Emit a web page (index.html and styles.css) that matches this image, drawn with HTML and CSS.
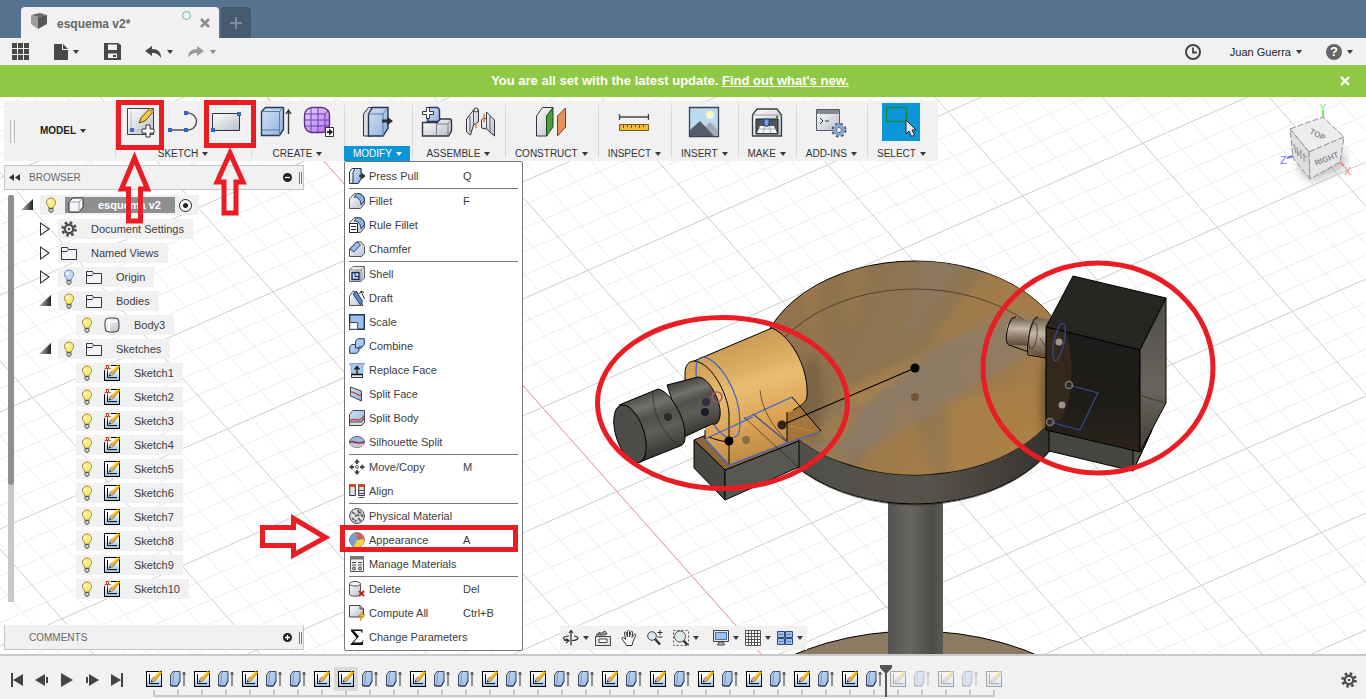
FILE: index.html
```html
<!DOCTYPE html>
<html lang="en">

<head>
    <meta charset="UTF-8">
    <meta name="viewport" content="width=device-width, initial-scale=1.0">
    <title>esquema v2*</title>
    <link rel="stylesheet" href="styles.css">
</head>

<body>

    <!-- shared icons -->
    <svg class="sprite" aria-hidden="true">
        <defs>
            <linearGradient id="gBlue" x1="0" y1="0" x2="1" y2="1">
                <stop offset="0" stop-color="#d3e3f6" />
                <stop offset="1" stop-color="#8db0dc" />
            </linearGradient>
            <linearGradient id="gGrey" x1="0" y1="0" x2="1" y2="1">
                <stop offset="0" stop-color="#fff" />
                <stop offset="1" stop-color="#b9bec9" />
            </linearGradient>
            <linearGradient id="gSketch" x1="0" y1="0" x2="0" y2="1">
                <stop offset="0.3" stop-color="#fff" />
                <stop offset="1" stop-color="#8dbbe8" />
            </linearGradient>
            <linearGradient id="gPurple" x1="0" y1="0" x2="1" y2="1">
                <stop offset="0" stop-color="#ecd9ff" />
                <stop offset="1" stop-color="#b272ee" />
            </linearGradient>
        </defs>
        <symbol id="i-bulb" viewBox="0 0 16 16">
            <path d="M8 1a4.600 4.600 0 0 0-4.600 4.600c0 2.300 2.300 3 2.300 5.400h4.600c0-2.400 2.300-3.100 2.300-5.400A4.600 4.600 0 0 0 8 1z" fill="#f9ec78" stroke="#a8893a" />
            <circle cx="6.500" cy="4.500" r="1.500" fill="#fffbd6" />
            <path d="M6 11.500h4v2.500l-1 1.300H7L6 14z" fill="#c9ccd2" stroke="#555" />
        </symbol>
        <symbol id="i-bulb-off" viewBox="0 0 16 16">
            <path d="M8 1a4.600 4.600 0 0 0-4.600 4.600c0 2.300 2.300 3 2.300 5.400h4.600c0-2.400 2.300-3.100 2.300-5.400A4.600 4.600 0 0 0 8 1z" fill="#c3d9fa" stroke="#6f86b5" />
            <circle cx="6.500" cy="4.500" r="1.500" fill="#f2f7ff" />
            <path d="M6 11.500h4v2.500l-1 1.300H7L6 14z" fill="#c9ccd2" stroke="#555" />
        </symbol>
        <symbol id="i-folder" viewBox="0 0 16 16">
            <path d="M.5 14.500v-12h6l1 2h8v10z" fill="#f4f5f8" stroke="#33363d" />
            <path d="M1 6.500h5l1.500-2" fill="none" stroke="#33363d" />
        </symbol>
        <symbol id="i-gear" viewBox="0 0 16 16">
            <circle cx="8" cy="8" r="6.500" fill="none" stroke="#4d4d4d" stroke-width="2.600" stroke-dasharray="2.550" />
            <circle cx="8" cy="8" r="4.200" fill="none" stroke="#4d4d4d" stroke-width="2.400" />
            <circle cx="8" cy="8" r="1.300" fill="#4d4d4d" />
        </symbol>
        <symbol id="i-cube" viewBox="0 0 16 16">
            <path d="M1 5l4-4h10v9l-4 5H1z" fill="#f4f5f8" stroke="#2e3138" />
            <path d="M1 5h10v10M11 5l4-4" fill="none" stroke="#9da1aa" />
        </symbol>
        <symbol id="i-body" viewBox="0 0 16 16">
            <rect x="1" y="1" width="14" height="14" rx="4" fill="url(#gGrey)" stroke="#3b3e45" />
            <path d="M3 4.500h10M5 5v9" stroke="#fff" stroke-width="2" />
        </symbol>
        <symbol id="i-sketch" viewBox="0 0 16 16">
            <rect x=".5" y=".5" width="15" height="15" fill="url(#gSketch)" stroke="#000" />
            <path d="M3.500 3v9.500h9.500" fill="none" stroke="#111" />
            <path d="M5 11l1.500-4L8 5.500l3 2.500-2 2z" fill="#dcae86" stroke="#77542a" stroke-width=".5" />
            <path d="M8 5.500L13.500 0 16 1.500l-5 6.500z" fill="#ffd21f" />
            <path d="M9.500 7L15 .8l1 .9-5 6.300z" fill="#d99a12" />
            <path d="M4.800 11.200l.8-2 1.200 1.200z" fill="#222" />
        </symbol>
        <symbol id="i-sketch-pin" viewBox="0 0 16 16">
            <use href="#i-sketch" />
            <path d="M0 0h7v5H0z" fill="#f1f1f1" />
            <path d="M1.500.5h4M2.500 1v2M4.500 1v2M.5 3.500h6M3.500 3.500v3" stroke="#c2491d" />
        </symbol>
        <symbol id="i-extrude" viewBox="0 0 16 16">
            <path d="M.5 4L3 .500h7v9.500l-2.500 5h-7z" fill="url(#gBlue)" stroke="#3b4a68" />
            <path d="M3 13V4l2-3.500" fill="none" stroke="#6d87b4" />
            <path d="M.5 12.500l1 2.500h6l2.500-5" fill="none" stroke="#2e3b55" />
            <path d="M14 15V2M12.500 3.500L14 1l1.500 2.500" fill="none" stroke="#333" />
        </symbol>
        <symbol id="i-presspull" viewBox="0 0 16 16">
            <path d="M.5 4L3 .5h9V11l-3 4.500H.5z" fill="url(#gGrey)" stroke="#26334d" />
            <path d="M4 4.500L6 .5h6V11l-3 4.500H4z" fill="url(#gBlue)" stroke="#26334d" />
            <path d="M10 8h4M12.500 5.500L15.500 8l-3 2.500" fill="none" stroke="#222" stroke-width="1.500" />
        </symbol>
        <symbol id="i-fillet" viewBox="0 0 16 16">
            <path d="M.5 15.500V6L5 .8h5c3 0 5.500 3 5.500 6V11l-4 4.500z" fill="url(#gGrey)" stroke="#555" />
            <path d="M5 4l3-3.500c4 0 7.500 3 7.500 7L12 12C12 7 9 4 5 4z" fill="#8fb2df" stroke="#1f3c74" />
        </symbol>
        <symbol id="i-rule" viewBox="0 0 16 16">
            <use href="#i-fillet" />
            <path d="M.5 6.500h8v9h-8z" fill="#fff" stroke="#222" />
            <path d="M2 9.500h5M2 12.500h5" stroke="#222" />
        </symbol>
        <symbol id="i-chamfer" viewBox="0 0 16 16">
            <path d="M.5 15.500V8L8 .8h4l3.500 4.500v7l-3 3.200z" fill="url(#gGrey)" stroke="#555" />
            <path d="M.8 8L8 .8l3.500 3L5 11z" fill="#9dbde6" stroke="#24427c" />
        </symbol>
        <symbol id="i-shell" viewBox="0 0 16 16">
            <path d="M.5 4L4 .5h11.500V12L12 15.500H.5z" fill="url(#gGrey)" stroke="#666" />
            <path d="M.5 4H12v11.500M12 4L15.500.5" fill="none" stroke="#888" />
            <path d="M3 6.500h7v7H3z" fill="#c6d9f0" stroke="#162d5c" stroke-width="1.400" />
            <path d="M6 6.500v4h4" fill="none" stroke="#162d5c" />
        </symbol>
        <symbol id="i-draft" viewBox="0 0 16 16">
            <path d="M.5 15.500V6L4 1l4 1 6 13.500z" fill="url(#gGrey)" stroke="#555" />
            <path d="M4 4l3-3 6.500 10-2 4z" fill="#5f86bf" stroke="#24427c" />
            <path d="M15.500 9L12 1M10.500 4L12 1l3 1.500" fill="none" stroke="#333" />
        </symbol>
        <symbol id="i-scale" viewBox="0 0 16 16">
            <path d="M.7.7h14.600v14.600H.7z" fill="#9cc2ee" stroke="#24314d" stroke-width="1.400" />
            <path d="M.7 8.500h8v6.800h-8z" fill="#fff" stroke="#444" />
        </symbol>
        <symbol id="i-combine" viewBox="0 0 16 16">
            <path d="M.7 15.300V9l2-2.500h4V3L9 .7h6.300v5.800L13 9h-3v4l-2.500 2.300z" fill="url(#gBlue)" stroke="#1c386e" />
            <path d="M6.500 7v3H13" fill="none" stroke="#1c386e" />
        </symbol>
        <symbol id="i-replace" viewBox="0 0 16 16">
            <path d="M2.500 2h11v13.500h-11z" fill="#e9eef5" stroke="#333" />
            <path d="M0 2c5-2 9 1.500 16-1l-2 3v8H2V4z" fill="#a9c9ef" stroke="#6d9bd2" stroke-width=".7" />
            <path d="M2.500 12.500h11M8 12V4.500M5.500 7.500L8 4.500l2.500 3" fill="none" stroke="#111" stroke-width="1.300" />
        </symbol>
        <symbol id="i-splitface" viewBox="0 0 16 16">
            <path d="M1.500 1L12.500 5v10L1.500 10z" fill="url(#gBlue)" stroke="#3b4252" />
            <path d="M1.500 6c4-1 6 4 11 3.500" fill="none" stroke="#cf3b2a" stroke-width="1.400" />
        </symbol>
        <symbol id="i-splitbody" viewBox="0 0 16 16">
            <path d="M.5 4.500L4 .5h11.500v11l-3 4H.5z" fill="url(#gBlue)" stroke="#3b4b6b" />
            <path d="M.5 12h12l3-4v4l-3 3.500H.5z" fill="#ddd" stroke="#444" />
            <path d="M.5 11c4-4 7 1 12-2l3-3.500" fill="none" stroke="#cf3b2a" stroke-width="1.400" />
        </symbol>
        <symbol id="i-silhouette" viewBox="0 0 16 16">
            <ellipse cx="8" cy="8" rx="7.500" ry="5.500" fill="#9db8dc" stroke="#5b5f69" />
            <path d="M.8 9C5 12 9 8 15.200 9c-1 6-13 6-14.400 0z" fill="#c8c8cc" />
            <path d="M.6 8c4-2 8 3 14.800 0" fill="none" stroke="#9c2d3c" stroke-width="1.500" />
        </symbol>
        <symbol id="i-move" viewBox="0 0 16 16">
            <path d="M8 0l3 3.500H9V5H7V3.500H5zM8 16l3-3.500H9V11H7v1.500H5zM0 8l3.500-3v2H5v2H3.500v2zM16 8l-3.500-3v2H11v2h1.500v2z" fill="#444" />
            <circle cx="8" cy="8" r="1.500" fill="none" stroke="#555" />
        </symbol>
        <symbol id="i-align" viewBox="0 0 16 16">
            <path d="M.7 1.500h5.600v11H.7zM9.700 1.500h5.600v11H9.700z" fill="#dfe2e8" stroke="#333" />
            <path d="M.5 1h6v3h-6zM9.500 1h6v3h-6z" fill="#d6481f" />
            <path d="M9.500 7.500h6M9.500 10.500h6M9.500 14.500h6" stroke="#555" />
        </symbol>
        <symbol id="i-physical" viewBox="0 0 16 16">
            <circle cx="8" cy="8" r="7.500" fill="#cfcfcf" stroke="#555" />
            <path d="M3 4l3 2M9 2l1 3M6 8l4-1M12 6l2 3M3 10l2 2M9 10l3 3M7 12l-1 2M12 4l-2 1" stroke="#555" stroke-width="1.500" />
            <path d="M5 3l2 1M3 7l2 2M8 9l-1 2M11 9l2 2" stroke="#fff" stroke-width="1.500" />
        </symbol>
        <symbol id="i-appearance" viewBox="0 0 16 16">
            <circle cx="8" cy="8" r="7.500" fill="#8fb0dc" stroke="#888" />
            <path d="M7 .8A7.500 7.500 0 0 1 15.300 7L8 8z" fill="#cf5f58" />
            <path d="M15.400 7.500A7.500 7.500 0 0 1 5 14.800L8 8z" fill="#f3d23b" />
            <path d="M4 14.500A7.500 7.500 0 0 1 7 .8L8 8z" fill="#7d9cc9" />
        </symbol>
        <symbol id="i-manage" viewBox="0 0 16 16">
            <path d="M1.500.500h13v15h-13z" fill="#f4f4f4" stroke="#555" />
            <path d="M1 0h14v3.500H1z" fill="#777" />
            <path d="M3 6.500h4M9 6.500h4M3 9h4M9 9h4" stroke="#444" />
            <circle cx="5" cy="12.500" r="1.500" fill="#bbb" stroke="#444" />
            <circle cx="11" cy="12.500" r="1.500" fill="#bbb" stroke="#444" />
        </symbol>
        <symbol id="i-delete" viewBox="0 0 16 16">
            <path d="M.5 3v10c0 3 11 3 11 0V3" fill="url(#gGrey)" stroke="#555" />
            <ellipse cx="6" cy="2.800" rx="5.500" ry="2.300" fill="#f5f5f5" stroke="#555" />
            <path d="M10 10l5 5M15 10l-5 5" stroke="#b52a1e" stroke-width="2" />
        </symbol>
        <symbol id="i-compute" viewBox="0 0 16 16">
            <path d="M.5 .5H11l3.500 3.500v8H.5z" fill="url(#gGrey)" stroke="#444" />
            <path d="M11 .5v3.500h3.500" fill="none" stroke="#444" />
            <path d="M14 6l-4.500 5h3L11 16l5-6.500h-3z" fill="#ffc62b" stroke="#c07a10" stroke-width=".6" />
        </symbol>
        <symbol id="i-sigma" viewBox="0 0 16 16">
            <path d="M2 .5h11.500V4H13c-.5-1.700-1-2-3-2H5l5 5.500L4.500 13.500H11c2 0 2.500-.8 3-2.500h.5l-.8 5H1.500v-.8L7.500 9 2 2z" fill="#111" />
        </symbol>
    </svg>

    <header class="tabs">
        <div class="tab">
            <svg class="tab-cube" width="18" height="18" viewBox="0 0 18 18">
                <path d="M1 3l9-2 7 2-9 2z" fill="#6b6b6b" />
                <path d="M1 3l7 2v12l-7-5z" fill="#9b9b9b" />
                <path d="M8 5l9-2v9l-9 5z" fill="#565656" />
            </svg>
            <span class="tab-title">esquema v2*</span>
            <span class="tab-status"></span>
            <button class="tab-close" aria-label="Close tab">
                <svg width="10" height="10" viewBox="0 0 10 10"><path d="M1 1l8 8M9 1L1 9" stroke="#8c8c8c" stroke-width="2.500" /></svg>
            </button>
        </div>
        <button class="tab-new" aria-label="New tab">
            <svg width="12" height="12" viewBox="0 0 12 12"><path d="M6 0v12M0 6h12" stroke="#7e8b9b" stroke-width="2" /></svg>
        </button>
    </header>

    <nav class="quickbar">
        <button aria-label="Data panel">
            <svg width="18" height="18" viewBox="0 0 18 18"><path d="M0 0h5v5H0zM6 0h5v5H6zM12 0h5v5h-5zM0 6h5v5H0zM6 6h5v5H6zM12 6h5v5h-5zM0 12h5v5H0zM6 12h5v5H6zM12 12h5v5h-5z" fill="#484848" /></svg>
        </button>
        <button class="drop q-file" aria-label="File">
            <svg width="14" height="16" viewBox="0 0 14 16"><path d="M0 0h8v6h6v10H0zM9 0l5 5H9z" fill="#484848" /></svg>
        </button>
        <button aria-label="Save">
            <svg width="17" height="17" viewBox="0 0 17 17"><path d="M0 0h14l3 2v15H0z" fill="#484848" /><path d="M4 1.500h9V7H4zM4 10.500h9V15H4z" fill="#f1f1f1" /><path d="M9 12h3v2H9z" fill="#484848" /></svg>
        </button>
        <button class="drop q-undo" aria-label="Undo">
            <svg width="17" height="12" viewBox="0 0 17 12"><path d="M0 5l7-5v3c6 0 9 3 9 9-2-3-4-5-9-5v3z" fill="#484848" /></svg>
        </button>
        <button class="drop q-redo" aria-label="Redo">
            <svg width="17" height="12" viewBox="0 0 17 12"><path d="M16 5L9 0v3C3 3 0 6 0 12c2-3 4-5 9-5v3z" fill="#9a9a9a" /></svg>
        </button>
        <button class="q-clock" aria-label="Job status">
            <svg width="16" height="16" viewBox="0 0 16 16"><circle cx="8" cy="8" r="7" fill="none" stroke="#444" stroke-width="2" /><path d="M8 3.500V8.500h4" fill="none" stroke="#444" stroke-width="1.800" /></svg>
        </button>
        <button class="drop q-user">Juan Guerra</button>
        <button class="drop q-help" aria-label="Help"><span class="help">?</span></button>
    </nav>

    <div class="banner">
        <p>You are all set with the latest update. <a href="#">Find out what's new.</a></p>
        <button class="banner-close" aria-label="Dismiss">
            <svg width="10" height="10" viewBox="0 0 10 10"><path d="M1 1l8 8M9 1L1 9" stroke="#fff" stroke-width="2.400" /></svg>
        </button>
    </div>

    <main class="workspace">

        <!-- 3D viewport -->
        <svg class="viewport" aria-label="3D view">
            <defs>
                <linearGradient id="wood" x1="0" y1="0" x2="1" y2="0.300">
                    <stop offset="0" stop-color="#94734a" />
                    <stop offset=".3" stop-color="#8f7350" />
                    <stop offset=".6" stop-color="#8e7553" />
                    <stop offset="1" stop-color="#a67e4a" />
                </linearGradient>
                <linearGradient id="rim" x1="0" y1="0" x2="1" y2="0">
                    <stop offset="0" stop-color="#4e4d49" />
                    <stop offset=".55" stop-color="#56534b" />
                    <stop offset="1" stop-color="#2f2d29" />
                </linearGradient>
                <linearGradient id="pole" x1="0" y1="0" x2="1" y2="0">
                    <stop offset="0" stop-color="#55534f" />
                    <stop offset=".4" stop-color="#686660" />
                    <stop offset=".8" stop-color="#4d4c46" />
                    <stop offset="1" stop-color="#5b5953" />
                </linearGradient>
                <linearGradient id="orange" x1=".3" y1="0" x2=".6" y2="1">
                    <stop offset="0" stop-color="#c49555" />
                    <stop offset=".25" stop-color="#d5a65b" />
                    <stop offset=".45" stop-color="#e9bd72" />
                    <stop offset=".7" stop-color="#dca557" />
                    <stop offset="1" stop-color="#b58443" />
                </linearGradient>
                <linearGradient id="shaft" x1=".3" y1="0" x2=".6" y2="1">
                    <stop offset="0" stop-color="#383733" />
                    <stop offset=".25" stop-color="#73716b" />
                    <stop offset=".4" stop-color="#504f4a" />
                    <stop offset=".6" stop-color="#5f5d57" />
                    <stop offset="1" stop-color="#2d2c29" />
                </linearGradient>
                <linearGradient id="steel" x1="0" y1="0" x2="0" y2="1">
                    <stop offset="0" stop-color="#6c5a47" />
                    <stop offset=".4" stop-color="#c5b6a5" />
                    <stop offset=".7" stop-color="#8a7764" />
                    <stop offset="1" stop-color="#5a4632" />
                </linearGradient>
                <linearGradient id="side" x1="0" y1="0" x2="0" y2="1">
                    <stop offset="0" stop-color="#4f4e49" />
                    <stop offset=".6" stop-color="#69655c" />
                    <stop offset="1" stop-color="#443f38" />
                </linearGradient>
                <linearGradient id="front" x1="0" y1="0" x2="0" y2="1">
                    <stop offset="0" stop-color="#1c1d1b" />
                    <stop offset=".6" stop-color="#1e1c19" />
                    <stop offset="1" stop-color="#2b231b" />
                </linearGradient>
                <filter id="soft"><feGaussianBlur stdDeviation="5" /></filter>
                <clipPath id="discClip"><ellipse cx="915" cy="368" rx="156" ry="107" /></clipPath>
            </defs>
            <g transform="translate(0 -97)">
                <g id="grid" class="grid"></g>
                <path d="M267 97L762 655" class="axis" />

                <!-- stand -->
                <ellipse cx="915" cy="789" rx="230" ry="158" fill="#8d7a63" stroke="#000" />
                <path d="M888 495h55v170h-55z" fill="url(#pole)" />

                <!-- disc -->
                <path d="M759 368v29a156 107 0 0 0 312 0v-29z" fill="url(#rim)" stroke="#000" />
                <ellipse cx="915" cy="368" rx="156" ry="107" fill="url(#wood)" stroke="#000" />
                <g clip-path="url(#discClip)">
                    <g filter="url(#soft)">
                        <path d="M925 345L1000 255l90 60z" fill="#a57d46" opacity=".7" />
                        <path d="M850 330L845 255l25 0z" fill="#a47b45" opacity=".5" />
                        <path d="M815 350L800 285l20-10z" fill="#a47b45" opacity=".5" />
                        <path d="M780 445L1000 310l70 20L830 470z" fill="#8b7f70" opacity=".6" />
                        <path d="M835 395L940 345l-80 62z" fill="#b08443" opacity=".7" />
                        <path d="M860 405L740 460l90 30z" fill="#a67d43" opacity=".7" />
                        <path d="M905 400L850 480l90 10z" fill="#a67e47" opacity=".7" />
                        <path d="M950 400l130-25v90l-130 30z" fill="#aa8045" opacity=".8" />
                        <path d="M880 430L790 445l40 10z" fill="#85796b" opacity=".6" />
                        <path d="M900 350l20-95h50z" fill="#8a7a63" opacity=".7" />
                        <path d="M830 455L960 380l-70 60z" fill="#8a7c68" opacity=".6" />
                        <ellipse cx="1055" cy="400" rx="14" ry="50" fill="#4a3418" opacity=".7" />
                        <ellipse cx="812" cy="400" rx="12" ry="44" fill="#6e583b" opacity=".6" />
                    </g>
                </g>
                <ellipse cx="915" cy="397" rx="156" ry="108" class="ghost" />
                <circle cx="915" cy="368" r="4.500" />
                <circle cx="915" cy="397" r="4" fill="#6f5736" />

                <!-- motor on the left -->
                <path d="M694 440l74-30 31 31-74 29z" fill="#8b673a" stroke="#000" />
                <path d="M694 440l31 30v30l-31-32z" fill="#494843" stroke="#000" />
                <path d="M725 470l74-29v26l-74 33z" fill="#595751" stroke="#000" />
                <path d="M744 419l48-22 29 34-34 11z" fill="#a4763c" />
                <path d="M685 388v-15c0-8 4-12 9-12l9-4 69-29c22 10 37 44 35 68-1 8-6 11-20 17v29l-58 23-24-27v-38z" fill="url(#orange)" />
                <path d="M694 361l78-33c22 10 37 44 35 68 0 6-6 10-14 14" class="edge" />
                <path d="M685 388v-15c0-8 4-12 9-12 16 1 33 30 35 52v52M705 430v9M787 412v30" class="edge" />
                <path d="M729 440c0 3-10 1-20-3" class="edge" />
                <path d="M703 357c14 1 37 32 37 66 0 12-3 15-11 15-14-4-33-40-33-66 0-10 3-15 7-15z" class="blue" />
                <path d="M705 439l24 26 92-34M705 439l48-22M744 419l48-22" class="blue" />
                <path d="M753 414l34 28" class="blue dim" />
                <path d="M792 397l29 34" class="edge" />
                <path d="M744 417l54 50M760 390c2 20 12 35 26 50" class="ghost" />
                <path d="M790 426l22 5" stroke="#d6862c" />
                <path d="M782 425L915 368" stroke="#000" stroke-width="1.200" />
                <path d="M667 385l31-8c11 0 24 25 22 39-1 7-4 9-8 8l-28 13z" fill="url(#shaft)" stroke="#000" />
                <path d="M619 405l39-16c12 2 28 29 27 48 0 6-2 8-5 9l-40 16z" fill="url(#shaft)" />
                <path d="M619 405l39-16c12 2 28 29 27 48 0 6-2 8-5 9l-40 16" class="edge" />
                <path d="M653 392c-1 20 10 44 27 54" class="ghost" />
                <ellipse cx="630" cy="434" rx="14" ry="30" transform="rotate(-18 630 434)" fill="#4d4c48" stroke="#000" />
                <circle cx="668" cy="417" r="4" fill="#2c2b28" />
                <circle cx="706" cy="402" r="4" fill="#302e3a" />
                <circle cx="705" cy="412" r="4" fill="#1c1a28" />
                <circle cx="717" cy="397" r="5" fill="none" stroke="#a2576c" stroke-width="1.500" />
                <circle cx="729" cy="441" r="4.500" />
                <circle cx="746" cy="440" r="4" fill="#8a7048" />
                <circle cx="782" cy="425" r="4.500" fill="#32240f" />

                <!-- box on the right -->
                <path d="M1013 317l22 5v24l-24-1c-8-1-6-27 2-28z" fill="url(#steel)" />
                <path d="M1016 317c-8-1-13 27-7 28l20 7" class="edge" />
                <path d="M1036 317l14 3v38l-20-4c-6-4-1-37 6-37z" fill="url(#steel)" />
                <path d="M1038 317c-8 0-12 34-10 38l18 3" class="edge" />
                <ellipse cx="1033" cy="336" rx="4" ry="13" transform="rotate(8 1033 336)" class="ghost" />
                <path d="M1049 425v26l84 20 19-41-15-25z" fill="#454541" stroke="#000" />
                <path d="M1133 445v26l19-41z" fill="#55524a" stroke="#000" />
                <path d="M1073 276l93 22-26 52-94-23z" fill="#272622" stroke="#000" />
                <path d="M1046 327l94 23v102l-94-22z" fill="url(#front)" stroke="#000" />
                <path d="M1047 328l18 4c10 25 8 60-2 85l-16 12z" fill="#35281c" />
                <path d="M1140 350l26-52v105l-26 49z" fill="url(#side)" stroke="#000" />
                <path d="M1073 276v100l93 27M1046 327c22 30 34 70 12 104M1040 338l29 47-20 37" class="ghost" />
                <ellipse cx="1059" cy="342" rx="5" ry="19" transform="rotate(12 1059 342)" class="blue dim" />
                <path d="M1069 385l29 8-18 37-30-8" class="blue dim" />
                <circle cx="1059" cy="342" r="3.500" fill="#9b948a" />
                <circle cx="1062" cy="405" r="3.500" fill="#9b948a" />
                <circle cx="1069" cy="385" r="3.500" fill="none" stroke="#777" stroke-width="1.500" />
                <circle cx="1050" cy="422" r="3.500" fill="none" stroke="#777" stroke-width="1.500" />

                <!-- view cube -->
                <path d="M1296 166l15 16 34-14v-18z" fill="#999" opacity=".6" filter="url(#soft)" />
                <path d="M1290 129l33-12 21 20-35 15z" fill="#ededed" class="cube-edge" />
                <path d="M1290 129l19 23 1 27-17-21z" fill="#dedede" class="cube-edge" />
                <path d="M1309 152l35-15-4 25-30 17z" fill="#e6e6e6" class="cube-edge" />
                <path d="M1323 117v-7" stroke="#7be07b" stroke-width="2" />
                <path d="M1287 158l6-2" stroke="#6b6be0" stroke-width="2" />
                <path d="M1340 162l4 4" stroke="#f08080" stroke-width="2" />
                <text x="1319" y="112" class="axis-label" fill="#86ec86">Y</text>
                <text x="1280" y="164" class="axis-label" fill="#7070ea">Z</text>
                <text x="1344" y="175" class="axis-label" fill="#f38181">X</text>
                <text class="cube-label" transform="translate(1309 133) rotate(28)">TOP</text>
                <text class="cube-label" transform="translate(1316 166) rotate(-22)">RIGHT</text>
                <path d="M1294 144l2 9M1297 147l1 9 3-6v9M1304 153v9M1303 154l4 4" stroke="#8b8f98" fill="none" />
            </g>
        </svg>

        <div class="toolbar">
            <div class="model">
                <span class="grip"></span>
                <button class="drop model-btn">MODEL</button>
            </div>

            <section class="group">
                <div class="tools">
                    <button aria-label="Create sketch">
                        <svg width="32" height="32" viewBox="0 0 32 32">
                            <path d="M3.500 2.500h26v26h-26z" fill="url(#gGrey)" stroke="#3c3f47" />
                            <path d="M7 5v19h17" fill="none" stroke="#b4b8c0" />
                            <path d="M6 22h4v4H6z" fill="#3f6fc9" />
                            <path d="M15 17l2-5L26 2l4 3-9 10z" fill="#f3ca3c" stroke="#65440f" />
                            <path d="M26 2l4 3-2 2.500-4-3z" fill="#d79a6a" />
                            <path d="M22 19h4v4h4v4h-4v4h-4v-4h-4v-4h4z" fill="#fff" stroke="#333" />
                        </svg>
                    </button>
                    <button aria-label="Line">
                        <svg width="32" height="32" viewBox="0 0 32 32">
                            <path d="M3 24h18a8.500 8.500 0 0 0 0-17h-2" fill="none" stroke="#50545c" stroke-width="1.500" />
                            <path d="M1 22h4v4H1zM17 22h4v4h-4zM17 5h4v4h-4z" fill="#3564b8" />
                        </svg>
                    </button>
                    <button aria-label="Rectangle">
                        <svg width="32" height="32" viewBox="0 0 32 32">
                            <path d="M2.500 7.500h27v17h-27z" fill="url(#gGrey)" stroke="#2e3138" />
                            <path d="M1 22h4v4H1zM27 6h4v4h-4z" fill="#3564b8" />
                        </svg>
                    </button>
                </div>
                <button class="drop label">SKETCH</button>
            </section>

            <section class="group">
                <div class="tools">
                    <button aria-label="Extrude">
                        <svg width="32" height="32" viewBox="0 0 32 32">
                            <path d="M1.500 5.500l4-4h18v22l-4 6h-18z" fill="url(#gBlue)" stroke="#2b3955" stroke-width="1.400" />
                            <path d="M1.500 5.500h18v24M19.500 5.500l4-4M1.500 24h18" fill="none" stroke="#5f7ba8" />
                            <path d="M28.500 28V5M26 8l2.500-4L31 8" fill="none" stroke="#333" stroke-width="1.400" />
                        </svg>
                    </button>
                    <button aria-label="Create form">
                        <svg width="32" height="32" viewBox="0 0 32 32">
                            <rect x="1.500" y="1.500" width="25" height="25" rx="8" fill="url(#gPurple)" stroke="#5a2f8d" stroke-width="1.400" />
                            <path d="M2 8h20v18M2 14h24M2 20h24M8 2v24M15 2v24M22 8l4-4" fill="none" stroke="#6d3da8" />
                            <path d="M22.500 21.500h8v9h-8z" fill="#fff" stroke="#333" />
                            <path d="M24 25h2v-2.500l4 3.500-4 3.500V27h-2z" fill="#222" />
                        </svg>
                    </button>
                </div>
                <button class="drop label">CREATE</button>
            </section>

            <section class="group group-open">
                <div class="tools">
                    <button aria-label="Press pull">
                        <svg width="32" height="32" viewBox="0 0 32 32">
                            <path d="M2.500 8l5-6.500h7L10 30H2.500z" fill="#d9dce3" stroke="#2b3445" />
                            <path d="M7.500 8l4-6.500H27V22l-5 8H7.500z" fill="url(#gBlue)" stroke="#26334d" stroke-width="1.400" />
                            <path d="M22 8l5-6.500M22 8v22M7.500 8H22" fill="none" stroke="#5f7ba8" />
                            <path d="M21 13.500h5v-3l6 4.500-6 4.500v-3h-5z" fill="#2e2e2e" />
                        </svg>
                    </button>
                </div>
                <button class="drop label" aria-expanded="true">MODIFY</button>

                <ul class="menu">
                    <li><button><svg><use href="#i-presspull" /></svg><span>Press Pull</span><kbd>Q</kbd></button></li>
                    <li class="first"><button><svg><use href="#i-fillet" /></svg><span>Fillet</span><kbd>F</kbd></button></li>
                    <li><button><svg><use href="#i-rule" /></svg><span>Rule Fillet</span></button></li>
                    <li><button><svg><use href="#i-chamfer" /></svg><span>Chamfer</span></button></li>
                    <li class="first"><button><svg><use href="#i-shell" /></svg><span>Shell</span></button></li>
                    <li><button><svg><use href="#i-draft" /></svg><span>Draft</span></button></li>
                    <li><button><svg><use href="#i-scale" /></svg><span>Scale</span></button></li>
                    <li><button><svg><use href="#i-combine" /></svg><span>Combine</span></button></li>
                    <li><button><svg><use href="#i-replace" /></svg><span>Replace Face</span></button></li>
                    <li><button><svg><use href="#i-splitface" /></svg><span>Split Face</span></button></li>
                    <li><button><svg><use href="#i-splitbody" /></svg><span>Split Body</span></button></li>
                    <li><button><svg><use href="#i-silhouette" /></svg><span>Silhouette Split</span></button></li>
                    <li class="first"><button><svg><use href="#i-move" /></svg><span>Move/Copy</span><kbd>M</kbd></button></li>
                    <li><button><svg><use href="#i-align" /></svg><span>Align</span></button></li>
                    <li class="first"><button><svg><use href="#i-physical" /></svg><span>Physical Material</span></button></li>
                    <li><button><svg><use href="#i-appearance" /></svg><span>Appearance</span><kbd>A</kbd></button></li>
                    <li><button><svg><use href="#i-manage" /></svg><span>Manage Materials</span></button></li>
                    <li class="first"><button><svg><use href="#i-delete" /></svg><span>Delete</span><kbd>Del</kbd></button></li>
                    <li><button><svg><use href="#i-compute" /></svg><span>Compute All</span><kbd>Ctrl+B</kbd></button></li>
                    <li><button><svg><use href="#i-sigma" /></svg><span>Change Parameters</span></button></li>
                </ul>
            </section>

            <section class="group">
                <div class="tools">
                    <button aria-label="New component">
                        <svg width="32" height="32" viewBox="0 0 32 32">
                            <path d="M6.500 15.500V4l2-2.500h8l2 2v12z" fill="url(#gBlue)" stroke="#26396a" stroke-width="1.400" />
                            <path d="M1.500 16.500h15V16l3-3h10l1 1v11l-3 5h-26z" fill="url(#gGrey)" stroke="#33363d" stroke-width="1.400" />
                            <path d="M15.500 17v13M16 18h11l3-4M27 18v12" fill="none" stroke="#777c88" />
                            <path d="M5.500 1.500h3v4h4v3h-4v4h-3v-4h-4v-3h4z" fill="#fff" stroke="#333" />
                        </svg>
                    </button>
                    <button aria-label="Joint">
                        <svg width="32" height="32" viewBox="0 0 32 32">
                            <path d="M2.500 13l7-9c2-3 5-1 5 1v11l-5 3-3 10-4-3z" fill="url(#gGrey)" stroke="#33363d" />
                            <path d="M17.500 14c1-2 3-2 5-1V6l8 8v16l-8-7-5-1z" fill="url(#gGrey)" stroke="#33363d" />
                            <path d="M9.500 5v14M6 10v16M22.500 13v10M26 10v16" stroke="#555a64" />
                            <path d="M12 17v5M20 8v8" stroke="#e07a27" stroke-width="1.500" />
                            <circle cx="12" cy="4" r="2" fill="#fff" stroke="#333" />
                        </svg>
                    </button>
                </div>
                <button class="drop label">ASSEMBLE</button>
            </section>

            <section class="group">
                <div class="tools">
                    <button aria-label="Offset plane">
                        <svg width="32" height="32" viewBox="0 0 32 32">
                            <path d="M1.500 10l6-8.500H18L12 10v20H1.500z" fill="url(#gGrey)" stroke="#33363d" />
                            <path d="M11.500 10L18 2v19l-6.500 9z" fill="#4f9a3f" stroke="#1e4a17" />
                            <path d="M22.500 10l8-8v19l-8 9z" fill="#ea8f58" stroke="#7d3f1c" />
                        </svg>
                    </button>
                </div>
                <button class="drop label">CONSTRUCT</button>
            </section>

            <section class="group">
                <div class="tools">
                    <button aria-label="Measure">
                        <svg width="32" height="32" viewBox="0 0 32 32">
                            <path d="M1.500 8v6M30.500 8v6M2 11h28" stroke="#44474f" stroke-width="1.300" />
                            <path d="M1.500 18.500h29v6h-29z" fill="#eebd3c" stroke="#7d5a12" />
                            <path d="M5.500 19v3M9.500 19v2M13.500 19v3M17.500 19v2M21.500 19v3M25.500 19v2" stroke="#6b4c10" />
                        </svg>
                    </button>
                </div>
                <button class="drop label">INSPECT</button>
            </section>

            <section class="group">
                <div class="tools">
                    <button aria-label="Insert image">
                        <svg width="32" height="32" viewBox="0 0 32 32">
                            <path d="M1.500 1.500h29v29h-29z" fill="#bcdcee" stroke="#3b4250" stroke-width="1.300" />
                            <circle cx="22" cy="9" r="4" fill="#fbf6c8" />
                            <path d="M14 24l8-8 8 8v6H14z" fill="#a3aab5" />
                            <path d="M2 24l10-9 14 15H2z" fill="#565c69" />
                        </svg>
                    </button>
                </div>
                <button class="drop label">INSERT</button>
            </section>

            <section class="group">
                <div class="tools">
                    <button aria-label="3D print">
                        <svg width="32" height="32" viewBox="0 0 32 32">
                            <path d="M1.500 9L6 3h20l4.500 6v21h-29z" fill="url(#gGrey)" stroke="#3b3e45" stroke-width="1.300" />
                            <path d="M2 9h28" stroke="#999" />
                            <path d="M5 13h22v15H5z" fill="#50545d" stroke="#26282d" />
                            <path d="M9 20h14l3 7H6z" fill="#f3f4f7" />
                            <path d="M8 23h16M14 20l-2 7M18 20l2 7" stroke="#aaa" />
                            <path d="M13 13h5v5l-2.500 3-2.500-3z" fill="#6fa3dc" stroke="#1f3c74" />
                            <path d="M25 10h2v2h-2z" fill="#21902a" />
                        </svg>
                    </button>
                </div>
                <button class="drop label">MAKE</button>
            </section>

            <section class="group">
                <div class="tools">
                    <button aria-label="Scripts and add-ins">
                        <svg width="32" height="32" viewBox="0 0 32 32">
                            <path d="M1.500 3.500h23v21h-23z" fill="url(#gGrey)" stroke="#555a64" />
                            <path d="M2 4h22v4H2z" fill="#848994" />
                            <path d="M5 12l3 3-3 3M10 15h4" fill="none" stroke="#333" />
                            <circle cx="24" cy="24" r="6" fill="none" stroke="#41526f" stroke-width="3" stroke-dasharray="2.400" />
                            <circle cx="24" cy="24" r="4.500" fill="#fff" stroke="#86a5d2" stroke-width="3" />
                            <circle cx="24" cy="24" r="2.500" fill="#fff" stroke="#41526f" />
                        </svg>
                    </button>
                </div>
                <button class="drop label">ADD-INS</button>
            </section>

            <section class="group">
                <div class="tools">
                    <button class="active-tool" aria-label="Select">
                        <svg width="38" height="38" viewBox="0 0 38 38">
                            <path d="M4.500 4.500h20v14h-20z" fill="none" stroke="#1f8a45" stroke-width="1.500" />
                            <path d="M24 17v14l3-3 2.500 5.500 3-1.500-2.500-5h4z" fill="#e6e9ef" stroke="#22252b" />
                        </svg>
                    </button>
                </div>
                <button class="drop label">SELECT</button>
            </section>
        </div>

        <div class="panel-head">
            <svg width="11" height="7" viewBox="0 0 11 7"><path d="M5 0v7L0 3.500zM11 0v7L6 3.500z" fill="#333" /></svg>
            <h2>BROWSER</h2>
            <button aria-label="Collapse">
                <svg width="9" height="9" viewBox="0 0 9 9"><circle cx="4.500" cy="4.500" r="4.500" fill="#222" /><path d="M2 4.500h5" stroke="#fff" stroke-width="1.300" /></svg>
            </button>
            <span class="grip small"></span>
        </div>

        <div class="browser">
            <div class="scroll"><div class="thumb"></div></div>
            <ul class="tree">
                <li class="root">
                    <i class="arrow open"></i>
                    <div class="node">
                        <svg><use href="#i-bulb" /></svg>
                        <span class="current"><svg><use href="#i-cube" /></svg>esquema v2</span>
                        <input type="radio" name="active" aria-label="Activate esquema v2" checked>
                    </div>
                </li>
                <li><i class="arrow"></i><div class="node"><svg><use href="#i-gear" /></svg><span>Document Settings</span></div></li>
                <li><i class="arrow"></i><div class="node"><svg><use href="#i-folder" /></svg><span>Named Views</span></div></li>
                <li><i class="arrow"></i><div class="node"><svg><use href="#i-bulb-off" /></svg><svg><use href="#i-folder" /></svg><span>Origin</span></div></li>
                <li><i class="arrow open"></i><div class="node"><svg><use href="#i-bulb" /></svg><svg><use href="#i-folder" /></svg><span>Bodies</span></div></li>
                <li class="leaf"><div class="node"><svg><use href="#i-bulb" /></svg><svg><use href="#i-body" /></svg><span>Body3</span></div></li>
                <li><i class="arrow open"></i><div class="node"><svg><use href="#i-bulb" /></svg><svg><use href="#i-folder" /></svg><span>Sketches</span></div></li>
                <li class="leaf"><div class="node"><svg><use href="#i-bulb" /></svg><svg><use href="#i-sketch-pin" /></svg><span>Sketch1</span></div></li>
                <li class="leaf"><div class="node"><svg><use href="#i-bulb" /></svg><svg><use href="#i-sketch-pin" /></svg><span>Sketch2</span></div></li>
                <li class="leaf"><div class="node"><svg><use href="#i-bulb" /></svg><svg><use href="#i-sketch-pin" /></svg><span>Sketch3</span></div></li>
                <li class="leaf"><div class="node"><svg><use href="#i-bulb" /></svg><svg><use href="#i-sketch-pin" /></svg><span>Sketch4</span></div></li>
                <li class="leaf"><div class="node"><svg><use href="#i-bulb" /></svg><svg><use href="#i-sketch" /></svg><span>Sketch5</span></div></li>
                <li class="leaf"><div class="node"><svg><use href="#i-bulb" /></svg><svg><use href="#i-sketch" /></svg><span>Sketch6</span></div></li>
                <li class="leaf"><div class="node"><svg><use href="#i-bulb" /></svg><svg><use href="#i-sketch" /></svg><span>Sketch7</span></div></li>
                <li class="leaf"><div class="node"><svg><use href="#i-bulb" /></svg><svg><use href="#i-sketch" /></svg><span>Sketch8</span></div></li>
                <li class="leaf"><div class="node"><svg><use href="#i-bulb" /></svg><svg><use href="#i-sketch" /></svg><span>Sketch9</span></div></li>
                <li class="leaf"><div class="node"><svg><use href="#i-bulb" /></svg><svg><use href="#i-sketch-pin" /></svg><span>Sketch10</span></div></li>
            </ul>
        </div>

        <div class="panel-head comments">
            <h2>COMMENTS</h2>
            <button aria-label="Expand">
                <svg width="9" height="9" viewBox="0 0 9 9"><circle cx="4.500" cy="4.500" r="4.500" fill="#222" /><path d="M2 4.500h5M4.500 2v5" stroke="#fff" stroke-width="1.300" /></svg>
            </button>
            <span class="grip small"></span>
        </div>

        <!-- view controls -->
        <div class="navbar">
            <button class="drop" aria-label="Orbit">
                <svg viewBox="0 0 16 16"><path d="M8 .5v15" stroke="#333" stroke-width="1.300" /><path d="M6 3l2-2.500L10 3M11 6c6 1 5 4-2 4.500M5 10.500C-1 9.500-1 6.500 6 6M1 10.500l4 0M3 13l3-2.500-3-2" fill="none" stroke="#333" stroke-width="1.200" /></svg>
            </button>
            <button aria-label="Look at">
                <svg viewBox="0 0 16 16"><path d="M.500 6.500h15v9h-15z" fill="#e4e6ea" stroke="#444" /><path d="M4 9h8v3.500H4z" fill="#fff" stroke="#444" /><path d="M1 5l4-3v2l5-3 2 3-3 1z" fill="#aaa" stroke="#444" /></svg>
            </button>
            <button aria-label="Pan">
                <svg viewBox="0 0 16 16"><path d="M5 14.500L1 9c-1-1.500 1-2 2-1l1.500 1.500L3.500 3c0-1.500 1.600-1.500 2 0L6.500 7V1.500c0-1.500 1.900-1.500 2 0V7l1.300-5c.5-1.300 2-.8 1.800.5L11 7.500l2-3c.8-1 2.200-.2 1.700 1L12 11.500l-1 4H5.500z" fill="#fff" stroke="#333" /></svg>
            </button>
            <button aria-label="Zoom">
                <svg viewBox="0 0 16 16"><path d="M8 9l5 5.500" stroke="#333" stroke-width="2.500" /><circle cx="5" cy="6" r="4.300" fill="#dde9f0" stroke="#444" /><path d="M13 0v5M10.500 2.500h5M10.500 7h5" stroke="#333" /></svg>
            </button>
            <button class="drop" aria-label="Fit">
                <svg viewBox="0 0 16 16"><path d="M.5.5h15v15H.5z" fill="none" stroke="#555" stroke-dasharray="2 2" /><path d="M10 10l4.500 5" stroke="#333" stroke-width="2.500" /><circle cx="7" cy="6.500" r="5.500" fill="#dde9e4" stroke="#555" /></svg>
            </button>
            <button class="drop screen" aria-label="Display settings">
                <svg viewBox="0 0 16 16"><path d="M.5 .5h15v11H.5z" fill="#e4e6ea" stroke="#444" /><path d="M2.500 2.500h11v7h-11z" fill="#9cc2ee" stroke="#4a6ea8" /><path d="M6 12h4l1.500 3h-7z" fill="#bbb" stroke="#444" /></svg>
            </button>
            <button class="drop" aria-label="Grid and snaps">
                <svg viewBox="0 0 16 16"><path d="M.5.500h15v15H.5zM3.500 0v16M6.500 0v16M9.500 0v16M12.500 0v16M0 3.500h16M0 6.500h16M0 9.500h16M0 12.500h16" fill="#fff" stroke="#555" /></svg>
            </button>
            <button class="drop" aria-label="Viewports">
                <svg viewBox="0 0 16 16"><path d="M.5 1.500h7v6h-7zM8.500 1.500h7v6h-7zM.5 8.500h7v6h-7zM8.500 8.500h7v6h-7z" fill="#9cbde8" stroke="#2f4a78" /><path d="M2 4.500h4M10 4.500h4M2 11.500h4M10 11.500h4" stroke="#5b7fb8" /></svg>
            </button>
        </div>
    </main>

    <footer class="timeline">
        <div class="player">
            <button aria-label="Go to start"><svg width="14" height="14" viewBox="0 0 14 14"><path d="M1 0h2v14H1zM13 1v12L3 7z" fill="#444" /></svg></button>
            <button aria-label="Step back"><svg width="14" height="14" viewBox="0 0 14 14"><path d="M10 1v12L0 7zM11 4h2v6h-2z" fill="#444" /></svg></button>
            <button aria-label="Play"><svg width="14" height="14" viewBox="0 0 14 14"><path d="M1 0v14l12-7z" fill="#444" /></svg></button>
            <button aria-label="Step forward"><svg width="14" height="14" viewBox="0 0 14 14"><path d="M4 1v12l10-6zM1 4h2v6H1z" fill="#444" /></svg></button>
            <button aria-label="Go to end"><svg width="14" height="14" viewBox="0 0 14 14"><path d="M11 0h2v14h-2zM1 1v12l10-6z" fill="#444" /></svg></button>
        </div>
        <ol class="steps" id="steps"></ol>
        <button class="settings" aria-label="Timeline settings"><svg width="16" height="16"><use href="#i-gear" /></svg></button>
    </footer>

    <!-- red marks -->
    <svg class="marks" aria-hidden="true">
        <path d="M118.500 102.500h43v45h-43zM206.500 102.500h47v43h-47zM342.500 527.500h173v22h-173z" />
        <path d="M134.500 158l13 31h-7v32h-12v-32h-7zM230 153l13 29h-7v31h-12v-31h-7zM262.500 527.500h31v-9l32 19-32 17.500v-9.500h-31z" />
        <ellipse cx="722.500" cy="403" rx="125" ry="85.500" />
        <ellipse cx="1098" cy="368" rx="115" ry="105" />
    </svg>

    <script src="script.js"></script>
</body>

</html>
```

FILE: styles.css
```css
* {
    box-sizing: border-box;
}

body {
    margin: 0;
    height: 100vh;
    display: flex;
    flex-direction: column;
    position: relative;
    overflow: hidden;
    background-color: #fff;
    color: #3c3c3c;
    font-family: "Liberation Sans", Arial, sans-serif;
    font-size: 11px;
    line-height: 14px;
}

button {
    display: flex;
    align-items: center;
    padding: 0;
    border: 0;
    background: none;
    color: inherit;
    font: inherit;
}

ul,
ol {
    list-style: none;
    margin: 0;
    padding: 0;
}

svg {
    display: block;
    flex: none;
}

.sprite {
    position: absolute;
    width: 0;
    height: 0;
}

/* little triangle after every drop-down button */
.drop::after {
    content: "";
    margin-left: 4px;
    border: 3px solid transparent;
    border-top: 4px solid #3a3a3a;
    border-bottom: 0;
}

/* tabs */
.tabs {
    display: flex;
    align-items: flex-end;
    gap: 2px;
    height: 38px;
    padding-left: 21px;
    background-color: #55738f;
}

.tab {
    display: flex;
    align-items: center;
    width: 198px;
    height: 31px;
    padding: 0 9px;
    border-radius: 4px 4px 0 0;
    background-color: #f1f1f1;
}

.tab-cube {
    margin-bottom: 4px;
}

.tab-title {
    margin: 2px auto 0 9px;
    color: #666;
    font-size: 12px;
    font-weight: bold;
}

.tab-status {
    width: 9px;
    height: 9px;
    margin: 0 9px 14px 0;
    border: 1px solid #58c3a5;
    border-radius: 50%;
}

.tab-new {
    justify-content: center;
    width: 30px;
    height: 31px;
    border-radius: 4px 4px 0 0;
    background-color: #465a70;
}

/* quick access */
.quickbar {
    display: flex;
    align-items: center;
    height: 27px;
    padding: 0 13px 0 12px;
    background-color: #f1f1f1;
}

.quickbar .drop::after {
    margin-left: 5px;
}

.q-file {
    margin: 0 25px 0 24px;
}

.q-undo {
    margin: 0 15px 0 24px;
}

.q-redo::after {
    border-top-color: #888;
}

.q-clock {
    margin-left: auto;
}

.q-user {
    margin: 0 24px 0 29px;
    color: #222;
}

.help {
    width: 16px;
    height: 16px;
    border-radius: 50%;
    background-color: #666;
    color: #fff;
    font-size: 13px;
    font-weight: bold;
    line-height: 16px;
    text-align: center;
}

/* banner */
.banner {
    display: flex;
    align-items: center;
    height: 32px;
    padding: 0 16px 0 0;
    background-color: #8fc844;
    color: #fff;
    font-size: 13px;
    font-weight: bold;
}

.banner p {
    margin: 0;
    flex: 1;
    text-align: center;
}

.banner a {
    color: inherit;
}

/* workspace */
.workspace {
    flex: 1;
    display: flex;
    flex-direction: column;
    align-items: flex-start;
    position: relative;
    min-height: 0;
    padding: 4px;
}

.viewport {
    position: absolute;
    inset: 0;
    width: 100%;
    height: 100%;
}

.grid line {
    stroke: #ededed;
}

.grid .major {
    stroke: #cdcdcd;
}

.axis {
    stroke: #ee9a9a;
}

.edge {
    fill: none;
    stroke: #000;
}

.ghost {
    fill: none;
    stroke: #2b2012;
    stroke-opacity: 0.6;
}

.blue {
    fill: none;
    stroke: #3f62c9;
    stroke-width: 1.2;
}

.dim {
    stroke: #38488f;
}

.cube-edge {
    stroke: #909090;
    stroke-dasharray: 6 2;
}

.axis-label {
    font-size: 11px;
}

.cube-label {
    fill: #8b8f98;
    font-size: 8px;
    font-weight: bold;
}

/* toolbar */
.toolbar {
    display: flex;
    position: relative;
    height: 60px;
    padding-right: 2px;
    background-color: #f1f1f1;
}

.model {
    display: flex;
    align-items: center;
    width: 111px;
    padding-left: 6px;
}

.grip {
    width: 5px;
    height: 23px;
    border: solid #bdbdbd;
    border-width: 0 1px;
}

.grip.small {
    width: 3px;
    height: 12px;
    border-color: #777;
}

.model-btn {
    margin-left: 25px;
    color: #222;
    font-size: 10px;
    font-weight: bold;
}

.group {
    display: flex;
    flex-direction: column;
    align-items: center;
    justify-content: space-between;
    position: relative;
    padding: 0 9px;
    background: linear-gradient(#d9d9d9, #d9d9d9) no-repeat 0 4px / 1px 53px;
}

.tools {
    display: flex;
    align-items: center;
    gap: 11px;
    height: 42px;
}

.label {
    height: 15px;
    padding: 0 1px;
    font-size: 10px;
    color: #333;
}

.group-open {
    padding: 0 2px 0 0;
}

.group-open .label {
    padding: 0 8px 0 9px;
    background-color: #0b96d8;
    color: #fff;
}

.group-open .label::after {
    border-top-color: #fff;
}

.active-tool {
    background-color: #0b96d8;
}

/* modify menu */
.menu {
    position: absolute;
    top: 100%;
    left: 0;
    z-index: 2;
    width: 179px;
    padding: 2px 4px 1px;
    border: 1px solid #777;
    border-radius: 2px;
    background-color: #fff;
}

.menu .first {
    border-top: 1px solid #777;
}

.menu button {
    width: 100%;
    height: 24px;
    gap: 4px;
}

.menu svg,
.node svg {
    width: 16px;
    height: 16px;
}

.menu span {
    width: 90px;
    text-align: left;
    white-space: nowrap;
}

.menu kbd {
    font-family: inherit;
}

/* browser panel */
.panel-head {
    display: flex;
    align-items: center;
    position: relative;
    width: 300px;
    height: 25px;
    margin-top: 4px;
    padding: 0 1px 0 4px;
    border: 1px solid #c6c6c6;
    background-color: #f1f1f1;
}

.panel-head h2 {
    margin: 0 auto 0 9px;
    color: #666;
    font-size: 10px;
    font-weight: normal;
}

.panel-head button {
    margin-right: 7px;
}

.comments {
    margin-top: auto;
    padding-left: 15px;
    border-top-color: #f1f1f1;
}

.browser {
    display: flex;
    position: relative;
    margin-top: 5px;
    padding-left: 4px;
}

.scroll {
    width: 6px;
    background-color: #c8c8c8;
}

.thumb {
    height: 290px;
    border-radius: 3px;
    background-color: #8e8e8e;
}

.tree {
    display: flex;
    flex-direction: column;
    gap: 4px;
    padding-bottom: 3px;
}

.tree li {
    display: flex;
    align-items: center;
    padding-left: 25px;
}

.tree .root {
    padding-left: 7px;
}

.tree .leaf {
    padding-left: 62px;
}

.arrow {
    width: 12px;
    height: 14px;
    margin-right: 7px;
    background-color: #333;
    clip-path: polygon(1px 0, 11px 7px, 1px 14px, 1px 0, 2px 2px, 2px 12px, 9px 7px, 2px 2px);
}

.arrow.open {
    background: linear-gradient(90deg, #bbb, #222);
    clip-path: polygon(0 12px, 12px 1px, 12px 12px);
}

.node {
    display: flex;
    align-items: center;
    gap: 9px;
    height: 20px;
    padding: 0 9px 0 3px;
    background-color: #f1f1f1;
}

.node > span {
    margin-left: 5px;
}

.root .node {
    gap: 4px;
    padding-right: 7px;
}

.node > .current {
    display: flex;
    align-items: center;
    gap: 14px;
    width: 110px;
    height: 16px;
    margin-left: 2px;
    padding-left: 3px;
    background-color: #8f8f8f;
    color: #fff;
    font-weight: bold;
}

.node input {
    appearance: none;
    width: 13px;
    height: 13px;
    margin: 0;
    border: 1px solid #222;
    border-radius: 50%;
    background: radial-gradient(#222 2px, #fff 3px);
}

/* bottom view controls */
.navbar {
    display: flex;
    align-items: center;
    gap: 10px;
    position: absolute;
    bottom: 4px;
    left: 560px;
    height: 24px;
    padding: 0 4px 0 3px;
    background-color: #f1f1f1;
}

.navbar svg {
    width: 16px;
    height: 16px;
}

.navbar .drop {
    margin-right: -4px;
}

.navbar .drop:last-child {
    margin-right: 0;
}

.navbar .screen {
    margin-left: 8px;
}

/* timeline */
.timeline {
    display: flex;
    align-items: center;
    height: 45px;
    padding: 4px 9px 0 10px;
    border-top: 2px solid #c9c9c9;
    background-color: #f1f1f1;
}

.player {
    display: flex;
    gap: 11px;
    width: 132px;
}

.steps {
    display: flex;
    align-self: flex-end;
    padding-bottom: 2px;
}

.step {
    display: flex;
    flex-direction: column;
    align-items: center;
    position: relative;
    width: 24px;
    height: 30px;
    padding-top: 4px;
}

.step svg {
    order: -1;
    width: 16px;
    height: 16px;
}

/* tick and rail under each step */
.step::before {
    content: "";
    width: 2px;
    height: 5px;
    margin-top: 3px;
    background-color: #c9c9c9;
}

.step::after {
    content: "";
    width: 24px;
    height: 2px;
    background-color: #c9c9c9;
}

.step:first-child::after {
    width: 13px;
    margin-left: 11px;
}

.step:last-child::after {
    width: 13px;
    margin-right: 11px;
}

.step.selected {
    background: linear-gradient(#dadada, #dadada) no-repeat 0 0 / 24px 24px;
}

.step.after svg {
    opacity: 0.3;
}

.marker {
    position: absolute;
    top: -2px;
    right: -6px;
    z-index: 1;
    width: 12px;
    height: 32px;
    background-color: #555;
    clip-path: polygon(0 0, 12px 0, 12px 3px, 7px 8px, 7px 32px, 5px 32px, 5px 8px, 0 3px);
}

.settings {
    margin-left: auto;
}

/* red marks lie over everything */
.marks {
    position: absolute;
    inset: 0;
    z-index: 3;
    width: 100%;
    height: 100%;
    fill: none;
    stroke: #ea1c24;
    stroke-width: 5;
    pointer-events: none;
}
```

FILE: script.js
```js
const svgNS = "http://www.w3.org/2000/svg"

// floor grid, every fifth line is a major one
const grid = document.getElementById("grid")

const addLine = (x1, y1, x2, y2, major) => {
    const line = document.createElementNS(svgNS, "line")
    line.setAttribute("x1", x1)
    line.setAttribute("y1", y1)
    line.setAttribute("x2", x2)
    line.setAttribute("y2", y2)
    if (major) line.setAttribute("class", "major")
    grid.appendChild(line)
}

for (let i = -10; i <= 60; i++) {
    const y = 178 + i * 23.4
    addLine(0, y, 1400, y - 1400 * 0.44, i % 5 === 0)
}

for (let i = -25; i <= 40; i++) {
    const x = 267 + i * 33.4
    addLine(x, 97, x + 495, 655, i % 5 === 0)
}

// timeline: S = sketch, E = extrude
const history = "SESESEESSEESEESESEESESESESESESESESES"
const selectedStep = 8
const currentStep = 30

const steps = document.getElementById("steps")

history.split("").forEach((kind, i) => {
    const li = document.createElement("li")
    li.className = "step"
    if (i === selectedStep) li.classList.add("selected")
    if (i > currentStep) li.classList.add("after")

    const icon = kind === "S" ? "i-sketch" : "i-extrude"
    li.innerHTML = `<svg><use href="#${icon}"/></svg>`

    if (i === currentStep) {
        const marker = document.createElement("span")
        marker.className = "marker"
        li.appendChild(marker)
    }
    steps.appendChild(li)
})
```
